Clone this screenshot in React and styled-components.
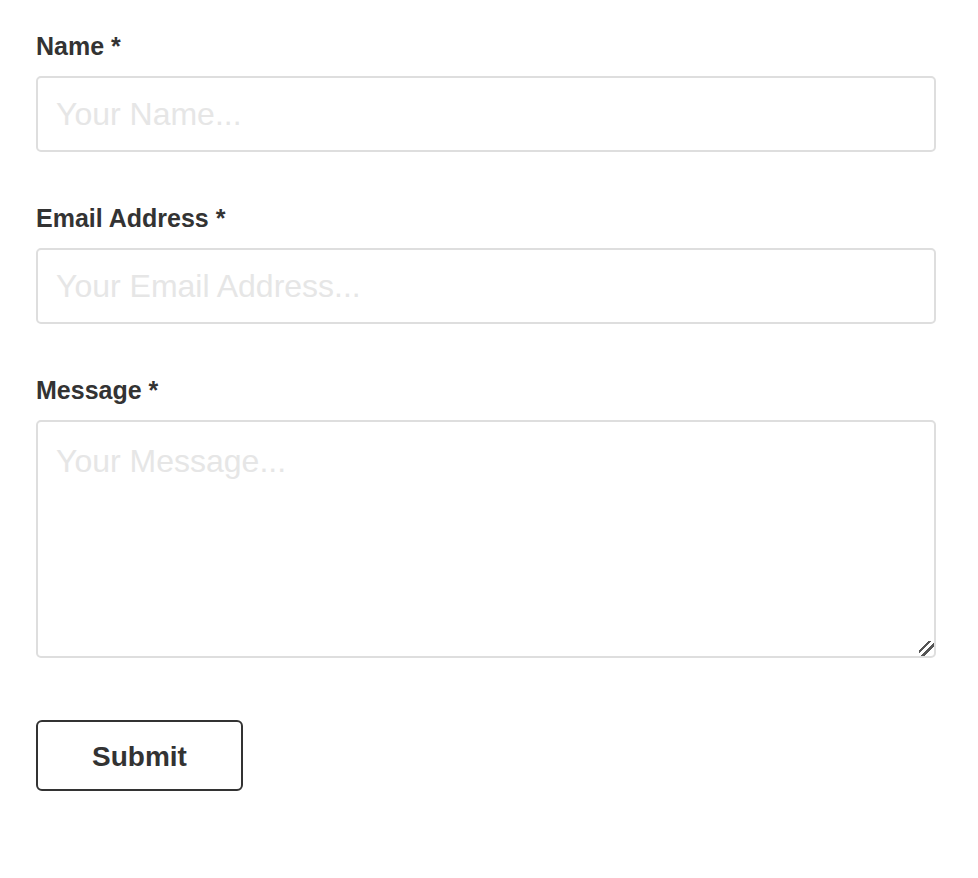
import styled, { createGlobalStyle } from "styled-components";

const GlobalStyle = createGlobalStyle`
  body {
    margin: 0;
    background: #fff;
    font-family: "Liberation Sans", Arial, sans-serif;
  }
`;

const Form = styled.form`
  width: 900px;
  padding: 32px 0 0 36px;
  display: flex;
  flex-direction: column;
`;

const Field = styled.div`
  display: flex;
  flex-direction: column;
  margin-bottom: ${({ last }) => (last ? "62px" : "52px")};
`;

const Label = styled.label`
  font-size: 25px;
  line-height: 28px;
  font-weight: bold;
  color: #333;
  margin-bottom: 16px;
`;

const inputBase = `
  box-sizing: border-box;
  width: 100%;
  border: 2px solid #dedede;
  border-radius: 5px;
  padding: 0 18px;
  font-family: "Liberation Sans", Arial, sans-serif;
  font-size: 32px;
  color: #333;
  outline: none;
  &::placeholder {
    color: #e6e6e6;
  }
`;

const Input = styled.input`
  ${inputBase}
  height: 76px;
`;

const TextArea = styled.textarea`
  ${inputBase}
  display: block;
  height: 238px;
  padding-top: 21px;
  padding-bottom: 18px;
  resize: vertical;
  &::-webkit-resizer {
    width: 15px;
    height: 15px;
    background: linear-gradient(
      135deg,
      transparent 0 31%,
      #555 31% 42%,
      transparent 42% 56%,
      #555 56% 67%,
      transparent 67%
    );
  }
`;

const SubmitButton = styled.button`
  box-sizing: border-box;
  align-self: flex-start;
  width: 207px;
  height: 71px;
  padding-top: 4px;
  background: #fff;
  border: 2px solid #333;
  border-radius: 6px;
  font-family: "Liberation Sans", Arial, sans-serif;
  font-size: 28px;
  font-weight: bold;
  color: #333;
  cursor: pointer;
`;

const App = () => {
  return (
    <>
      <GlobalStyle />
      <Form onSubmit={(e) => e.preventDefault()}>
        <Field>
          <Label htmlFor="name">Name *</Label>
          <Input id="name" type="text" placeholder="Your Name..." />
        </Field>
        <Field>
          <Label htmlFor="email">Email Address *</Label>
          <Input id="email" type="email" placeholder="Your Email Address..." />
        </Field>
        <Field last>
          <Label htmlFor="message">Message *</Label>
          <TextArea id="message" placeholder="Your Message..." />
        </Field>
        <SubmitButton type="submit">Submit</SubmitButton>
      </Form>
    </>
  );
};

export default App;
